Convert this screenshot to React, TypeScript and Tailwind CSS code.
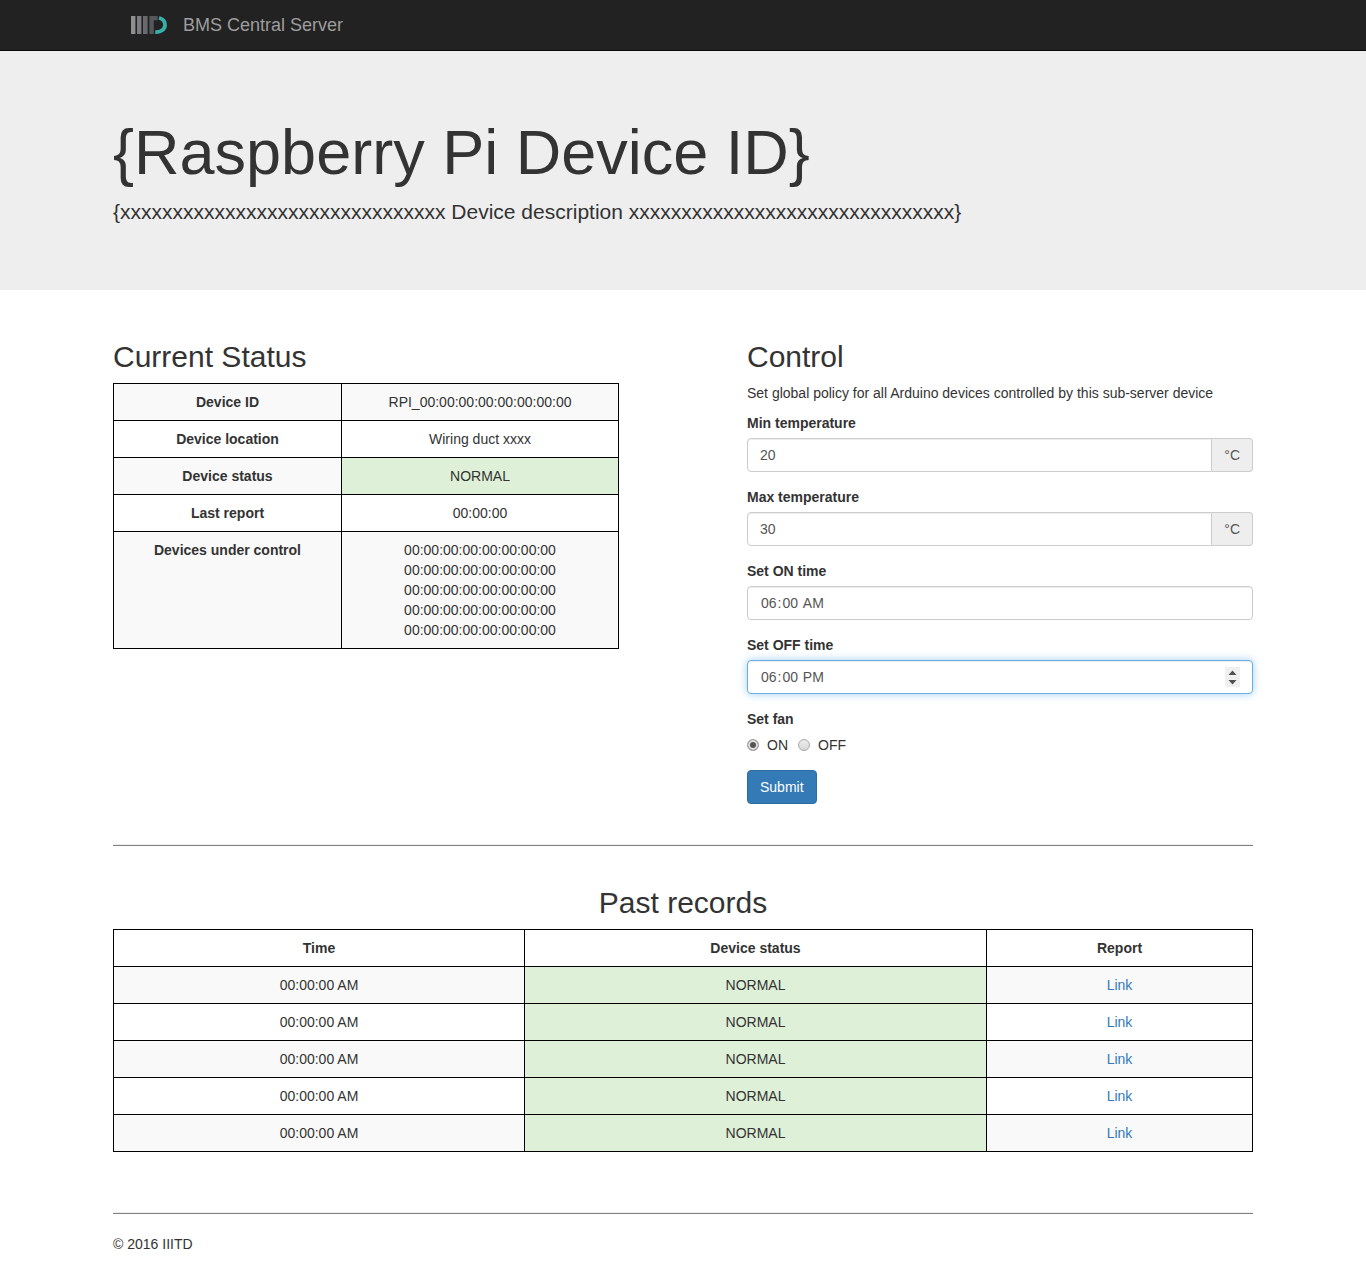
import React, { useState } from "react";

const deviceIds = Array.from({ length: 5 }, () => "00:00:00:00:00:00:00:00");
const records = Array.from({ length: 5 }, () => ({ time: "00:00:00 AM", status: "NORMAL" }));

const cell = "border border-black p-2 align-top";
const field = "h-[34px] w-full min-w-0 border bg-white px-3 text-[#555] outline-none";
const idle = "border-[#ccc] shadow-[inset_0_1px_1px_rgba(0,0,0,0.075)]";
const active = "border-[#66afe9] shadow-[inset_0_1px_1px_rgba(0,0,0,0.075),0_0_8px_rgba(102,175,233,0.6)]";
const timeField = "rounded [&::-webkit-calendar-picker-indicator]:hidden";
const heading = "mb-2.5 text-[30px] leading-[33px]";

function Logo() {
  return (
    <svg className="h-5 w-9" viewBox="0 0 36 20" aria-hidden="true">
      <rect x="0" y="1" width="4.4" height="18" fill="#8e8f91" />
      <rect x="6" y="1" width="4.4" height="18" fill="#7c7d80" />
      <rect x="12" y="1" width="4.6" height="18" fill="#696a6d" />
      <path d="M18.4 1h8.2v4.2h-3.8V19h-4.4z" fill="#56575a" />
      <path d="M28 2.8C32 4 34 7 34 10C34 14.5 30 17.3 24.2 17.2" fill="none" stroke="#36b0a9" strokeWidth="3.8" />
    </svg>
  );
}

function TemperatureField({ id, label, initial }: { id: string; label: string; initial: string }) {
  return (
    <div className="mb-[15px]">
      <label htmlFor={id} className="mb-[5px] block font-bold">
        {label}
      </label>
      <div className="flex">
        <input id={id} type="text" inputMode="numeric" defaultValue={initial} className={`${field} ${idle} rounded-l`} />
        <span className="flex shrink-0 items-center rounded-r border border-l-0 border-[#ccc] bg-[#eee] px-3 text-[#555]">
          °C
        </span>
      </div>
    </div>
  );
}

function FanOption({ id, label, checked, onSelect }: { id: string; label: string; checked: boolean; onSelect: () => void }) {
  return (
    <label htmlFor={id} className="flex items-center gap-2">
      <input
        id={id}
        type="radio"
        name="fan"
        checked={checked}
        onChange={onSelect}
        className="size-3 appearance-none rounded-full border border-[#a8a8a8] bg-linear-to-b from-[#ececec] to-[#d8d8d8] checked:bg-none checked:bg-[#555] checked:shadow-[inset_0_0_0_2px_#e2e2e2]"
      />
      {label}
    </label>
  );
}

export default function App() {
  const [fan, setFan] = useState("on");

  return (
    <div className="bg-white font-['Liberation_Sans',Arial,sans-serif] text-[14px] leading-5 text-[#333]">
      <nav className="border-b border-[#080808] bg-[#222]">
        <div className="mx-auto flex h-[50px] max-w-[1170px] items-center px-[15px]">
          <a href="#" className="ml-[18px] flex items-center gap-4 text-[18px] text-[#9d9d9d]">
            <Logo />
            BMS Central Server
          </a>
        </div>
      </nav>

      <header className="bg-[#eee] pt-[67px] pb-[63px]">
        <div className="mx-auto max-w-[1170px] px-[15px]">
          <h1 className="mb-2.5 text-[63px] leading-[69px]">{"{Raspberry Pi Device ID}"}</h1>
          <p className="text-[21px] leading-[30px]">
            {"{xxxxxxxxxxxxxxxxxxxxxxxxxxxxxxx Device description xxxxxxxxxxxxxxxxxxxxxxxxxxxxxxx}"}
          </p>
        </div>
      </header>

      <div className="mx-auto max-w-[1170px] px-[15px]">
        <main className="pt-[50px]">
          <div className="grid grid-cols-2 gap-32">
            <section>
              <h2 className={heading}>Current Status</h2>
              <table className="w-full table-fixed border-collapse text-center">
                <colgroup>
                  <col className="w-[228px]" />
                  <col />
                </colgroup>
                <tbody>
                  <tr className="bg-[#f9f9f9]">
                    <th scope="row" className={cell}>Device ID</th>
                    <td className={cell}>RPI_00:00:00:00:00:00:00:00</td>
                  </tr>
                  <tr>
                    <th scope="row" className={cell}>Device location</th>
                    <td className={cell}>Wiring duct xxxx</td>
                  </tr>
                  <tr className="bg-[#f9f9f9]">
                    <th scope="row" className={cell}>Device status</th>
                    <td className={`${cell} bg-[#dff0d8]`}>NORMAL</td>
                  </tr>
                  <tr>
                    <th scope="row" className={cell}>Last report</th>
                    <td className={cell}>00:00:00</td>
                  </tr>
                  <tr className="bg-[#f9f9f9]">
                    <th scope="row" className={cell}>Devices under control</th>
                    <td className={cell}>
                      {deviceIds.map((id, i) => (
                        <div key={i}>{id}</div>
                      ))}
                    </td>
                  </tr>
                </tbody>
              </table>
            </section>

            <section>
              <h2 className={heading}>Control</h2>
              <p className="mb-2.5">Set global policy for all Arduino devices controlled by this sub-server device</p>
              <form onSubmit={(e) => e.preventDefault()}>
                <TemperatureField id="min-temp" label="Min temperature" initial="20" />
                <TemperatureField id="max-temp" label="Max temperature" initial="30" />
                <div className="mb-[15px]">
                  <label htmlFor="on-time" className="mb-[5px] block font-bold">Set ON time</label>
                  <input id="on-time" type="time" defaultValue="06:00" className={`${field} ${idle} ${timeField}`} />
                </div>
                <div className="mb-[15px]">
                  <label htmlFor="off-time" className="mb-[5px] block font-bold">Set OFF time</label>
                  <div className="relative">
                    <input id="off-time" type="time" defaultValue="18:00" className={`${field} ${active} ${timeField}`} />
                    <svg className="absolute top-[7px] right-[13px] h-5 w-[15px]" viewBox="0 0 15 20" aria-hidden="true">
                      <rect width="15" height="20" fill="#f0f0f0" />
                      <path d="M7.5 3.5L11.5 8h-8zM7.5 17.5L11.5 13h-8z" fill="#505050" />
                    </svg>
                  </div>
                </div>
                <fieldset className="mb-[15px]">
                  <legend className="mb-1.5 font-bold">Set fan</legend>
                  <div className="flex gap-2.5">
                    <FanOption id="fan-on" label="ON" checked={fan === "on"} onSelect={() => setFan("on")} />
                    <FanOption id="fan-off" label="OFF" checked={fan === "off"} onSelect={() => setFan("off")} />
                  </div>
                </fieldset>
                <button type="submit" className="h-[34px] rounded border border-[#2e6da4] bg-[#337ab7] px-3 text-white">
                  Submit
                </button>
              </form>
            </section>
          </div>

          <hr className="mt-10 mb-10 h-0.5 border-t border-b border-t-[#eee] border-b-[#808080]" />

          <section>
            <h2 className={`${heading} text-center`}>Past records</h2>
            <table className="w-full table-fixed border-collapse text-center">
              <colgroup>
                <col className="w-[411px]" />
                <col className="w-[462px]" />
                <col />
              </colgroup>
              <thead>
                <tr>
                  <th scope="col" className={cell}>Time</th>
                  <th scope="col" className={cell}>Device status</th>
                  <th scope="col" className={cell}>Report</th>
                </tr>
              </thead>
              <tbody>
                {records.map((record, i) => (
                  <tr key={i} className="odd:bg-[#f9f9f9]">
                    <td className={cell}>{record.time}</td>
                    <td className={`${cell} bg-[#dff0d8]`}>{record.status}</td>
                    <td className={cell}>
                      <a href="#" className="text-[#337ab7]">Link</a>
                    </td>
                  </tr>
                ))}
              </tbody>
            </table>
          </section>
        </main>

        <footer className="pb-[30px]">
          <hr className="mt-[60px] mb-5 h-0.5 border-t border-b border-t-[#eee] border-b-[#808080]" />
          <p>© 2016 IIITD</p>
        </footer>
      </div>
    </div>
  );
}
